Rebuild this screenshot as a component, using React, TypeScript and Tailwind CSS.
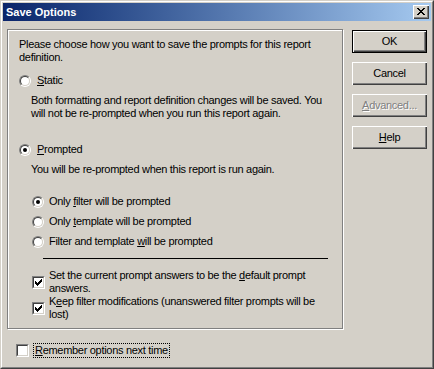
import React from 'react';

// classic 3D radio button
const Radio = ({ checked }: { checked?: boolean }) => (
  <span className="relative inline-block w-[12px] h-[12px] shrink-0 rounded-full border border-t-[#808080] border-l-[#808080] border-r-white border-b-white">
    <span className="absolute inset-0 flex items-center justify-center rounded-full border border-t-[#404040] border-l-[#404040] border-r-[#d4d0c8] border-b-[#d4d0c8] bg-white">
      {checked && <span className="block w-[4px] h-[4px] rounded-full bg-black" />}
    </span>
  </span>
);

const CheckMark = () => (
  <svg width="7" height="7" viewBox="0 0 7 7" shapeRendering="crispEdges">
    <rect x="0" y="2" width="1" height="3" fill="#000" />
    <rect x="1" y="3" width="1" height="3" fill="#000" />
    <rect x="2" y="4" width="1" height="3" fill="#000" />
    <rect x="3" y="3" width="1" height="3" fill="#000" />
    <rect x="4" y="2" width="1" height="3" fill="#000" />
    <rect x="5" y="1" width="1" height="3" fill="#000" />
    <rect x="6" y="0" width="1" height="3" fill="#000" />
  </svg>
);

const Checkbox = ({ checked }: { checked?: boolean }) => (
  <span className="inline-block w-[13px] h-[13px] shrink-0 border border-t-[#808080] border-l-[#808080] border-r-white border-b-white">
    <span className="flex w-full h-full items-center justify-center border border-t-[#404040] border-l-[#404040] border-r-[#d4d0c8] border-b-[#d4d0c8] bg-white">
      {checked && <CheckMark />}
    </span>
  </span>
);

const Button = ({ children, isDefault }: { children: React.ReactNode; isDefault?: boolean }) => (
  <div
    className={`w-[75px] h-[23px] flex items-center justify-center bg-[#d4d0c8] shadow-[inset_1px_1px_0_#fff,inset_-1px_-1px_0_#404040,inset_-2px_-2px_0_#808080] ${
      isDefault ? 'border border-black' : ''
    }`}
  >
    {children}
  </div>
);

const CloseButton = () => (
  <div className="w-[16px] h-[14px] flex items-center justify-center bg-[#d4d0c8] shadow-[inset_1px_1px_0_#fff,inset_-1px_-1px_0_#404040,inset_-2px_-2px_0_#808080]">
    <svg width="8" height="7" viewBox="0 0 8 7" shapeRendering="crispEdges" className="mb-px">
      <path d="M0 0h2v1h-2zM6 0h2v1h-2zM1 1h2v1h-2zM5 1h2v1h-2zM2 2h4v1h-4zM3 3h2v1h-2zM2 4h4v1h-4zM1 5h2v1h-2zM5 5h2v1h-2zM0 6h2v1h-2zM6 6h2v1h-2z" fill="#000" />
    </svg>
  </div>
);

const App = () => {
  return (
    <div
      className="w-[434px] h-[369px] border border-t-[#d4d0c8] border-l-[#d4d0c8] border-r-[#404040] border-b-[#404040] text-[11px] leading-[13px] text-black"
      style={{ fontFamily: '"Liberation Sans", Arial, sans-serif' }}
    >
      <div className="h-full flex flex-col p-px bg-[#d4d0c8] border border-t-white border-l-white border-r-[#808080] border-b-[#808080]">
        {/* title bar */}
        <div className="h-[18px] shrink-0 flex items-center pl-[3px] pr-[2px] bg-linear-to-r from-[#0a246a] to-[#a6caf0]">
          <span className="flex-1 text-white font-bold">Save Options</span>
          <CloseButton />
        </div>

        <div className="flex tracking-[-0.3px]">
          <div className="flex flex-col ml-[4px] mt-[8px]">
            {/* etched frame */}
            <div className="w-[336px] h-[300px] border border-[#808080] shadow-[1px_1px_0_#fff,inset_1px_1px_0_#fff] pl-[11px] pt-[8px] flex flex-col">
              <p className="whitespace-nowrap">
                Please choose how you want to save the prompts for this report
                <br />
                definition.
              </p>

              <div className="flex items-center gap-[6px] mt-[10px]">
                <Radio />
                <span>
                  <span className="underline">S</span>tatic
                </span>
              </div>
              <p className="whitespace-nowrap ml-[12px] mt-[7px]">
                Both formatting and report definition changes will be saved. You
                <br />
                will not be re-prompted when you run this report again.
              </p>

              <div className="flex items-center gap-[6px] mt-[23px]">
                <Radio checked />
                <span>
                  <span className="underline">P</span>rompted
                </span>
              </div>
              <p className="ml-[12px] mt-[7px]">You will be re-prompted when this report is run again.</p>

              <div className="flex items-center gap-[5px] ml-[13px] mt-[19px]">
                <Radio checked />
                <span>
                  Only <span className="underline">f</span>ilter will be prompted
                </span>
              </div>
              <div className="flex items-center gap-[5px] ml-[13px] mt-[7px]">
                <Radio />
                <span>
                  Only <span className="underline">t</span>emplate will be prompted
                </span>
              </div>
              <div className="flex items-center gap-[5px] ml-[13px] mt-[7px]">
                <Radio />
                <span>
                  Filter and template <span className="underline">w</span>ill be prompted
                </span>
              </div>

              <div className="h-px w-[285px] bg-black ml-[24px] mt-[10px]" />

              <div className="flex items-center gap-[4px] ml-[13px] mt-[10px]">
                <Checkbox checked />
                <p className="whitespace-nowrap">
                  Set the current prompt answers to be the <span className="underline">d</span>efault prompt
                  <br />
                  answers.
                </p>
              </div>
              <div className="flex items-center gap-[4px] ml-[13px]">
                <Checkbox checked />
                <p className="whitespace-nowrap">
                  K<span className="underline">e</span>ep filter modifications (unanswered filter prompts will be
                  <br />
                  lost)
                </p>
              </div>
            </div>

            <div className="flex items-center gap-[4px] ml-[9px] mt-[14px]">
              <Checkbox />
              <span className="border border-dotted border-black px-px">
                <span className="underline">R</span>emember options next time
              </span>
            </div>
          </div>

          {/* buttons */}
          <div className="flex flex-col gap-[9px] ml-[9px] mt-[9px]">
            <Button isDefault>OK</Button>
            <Button>Cancel</Button>
            <Button>
              <span className="text-[#808080] [text-shadow:1px_1px_0_#fff]">
                <span className="underline">A</span>dvanced...
              </span>
            </Button>
            <Button>
              <span>
                <span className="underline">H</span>elp
              </span>
            </Button>
          </div>
        </div>
      </div>
    </div>
  );
};

export default App;
